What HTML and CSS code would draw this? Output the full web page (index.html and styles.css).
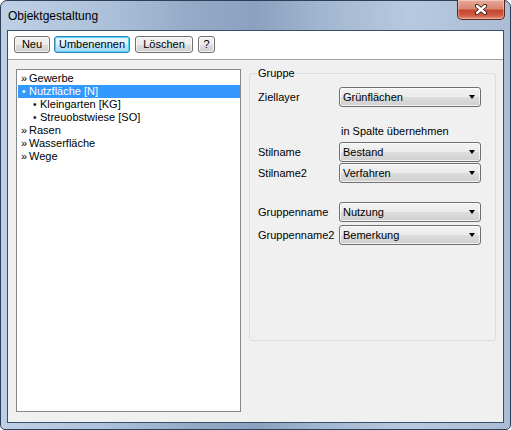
FILE: index.html
```html
<!DOCTYPE html>
<html>
<head>
<meta charset="utf-8">
<link rel="stylesheet" href="styles.css">
</head>
<body>
<div class="window">
  <div class="titlebar">
    <span class="title">Objektgestaltung</span>
    <div class="close">
      <svg width="14" height="11" viewBox="0 0 14 11">
        <path d="M3 2 L11 9 M11 2 L3 9" stroke="#3b1a14" stroke-width="4.2" stroke-linecap="round"/>
        <path d="M3 2 L11 9 M11 2 L3 9" stroke="#ffffff" stroke-width="2.4" stroke-linecap="round"/>
      </svg>
    </div>
  </div>
  <div class="client">
    <div class="toolbar">
      <button class="btn w-neu">Neu</button>
      <button class="btn default w-umb">Umbenennen</button>
      <button class="btn w-los">Löschen</button>
      <button class="btn w-q">?</button>
    </div>
    <div class="content">
      <div class="listbox">
        <div class="row"><span class="mark">»</span>Gewerbe</div>
        <div class="row selected"><span class="mark dot">•</span>Nutzfläche [N]</div>
        <div class="row child"><span class="mark dot">•</span>Kleingarten [KG]</div>
        <div class="row child"><span class="mark dot">•</span>Streuobstwiese [SO]</div>
        <div class="row"><span class="mark">»</span>Rasen</div>
        <div class="row"><span class="mark">»</span>Wasserfläche</div>
        <div class="row"><span class="mark">»</span>Wege</div>
      </div>
      <div class="group">
        <div class="legend">Gruppe</div>
        <div class="field first">
          <span class="label">Ziellayer</span>
          <div class="combo"><span>Grünflächen</span><i class="arrow"></i></div>
        </div>
        <div class="note">in Spalte übernehmen</div>
        <div class="field gap4">
          <span class="label">Stilname</span>
          <div class="combo"><span>Bestand</span><i class="arrow"></i></div>
        </div>
        <div class="field gap1">
          <span class="label">Stilname2</span>
          <div class="combo"><span>Verfahren</span><i class="arrow"></i></div>
        </div>
        <div class="field gap19">
          <span class="label">Gruppenname</span>
          <div class="combo"><span>Nutzung</span><i class="arrow"></i></div>
        </div>
        <div class="field gap3">
          <span class="label">Gruppenname2</span>
          <div class="combo"><span>Bemerkung</span><i class="arrow"></i></div>
        </div>
      </div>
    </div>
  </div>
</div>
</body>
</html>
```

FILE: styles.css
```css
* { box-sizing: border-box; }
html, body { margin: 0; padding: 0; background: #ffffff; }
body {
  font-family: "Liberation Sans", Arial, sans-serif;
  font-size: 11px;
  color: #000;
}
.window {
  width: 511px;
  height: 430px;
  border: 1px solid #2e3f57;
  border-radius: 7px 7px 5px 5px;
  padding: 0 6px 6px 6px;
  background:
    linear-gradient(90deg, #bdd0e6 0%, #adc1da 20%, #93aac7 38%, #8aa1bf 50%, #a0b5cf 62%, #b7c9df 80%, #abbdd5 100%);
  display: flex;
  flex-direction: column;
}
.titlebar {
  height: 29px;
  display: flex;
  justify-content: space-between;
  align-items: flex-start;
  padding: 0 0 0 1px;
}
.title {
  font-family: "Liberation Sans", Arial, sans-serif;
  font-size: 12px;
  line-height: 15px;
  padding-top: 8px;
  color: #000;
}
.close {
  width: 48px;
  height: 20px;
  margin-top: -1px;
  margin-right: -1px;
  border: 1px solid #57251c;
  border-top: none;
  border-radius: 0 0 5px 5px;
  background: linear-gradient(#e9a99a 0%, #d98773 45%, #c6452d 55%, #cf5a40 80%, #e19078 100%);
  box-shadow: inset 0 0 0 1px rgba(255,255,255,0.35);
  display: flex;
  align-items: center;
  justify-content: center;
}
.close svg { display: block; }
.client {
  flex: 1;
  border: 1px solid #3b4e68;
  background: #f0f0f0;
  display: flex;
  flex-direction: column;
}
.toolbar {
  height: 29px;
  background: #ffffff;
  border-bottom: 1px solid #a0a0a0;
  padding: 5px 0 0 6px;
  display: flex;
  align-items: flex-start;
}
.btn {
  height: 17px;
  padding: 0;
  margin: 0 5px 0 0;
  font-family: "Liberation Sans", Arial, sans-serif;
  font-size: 11px;
  line-height: 15px;
  color: #000;
  border: 1px solid #707070;
  border-radius: 3px;
  background: linear-gradient(#f2f2f2 0%, #ebebeb 50%, #dddddd 51%, #cfcfcf 100%);
  box-shadow: inset 0 0 0 1px rgba(255,255,255,0.7);
}
.btn.default {
  border-color: #3c7fb1;
  background: linear-gradient(#eaf6fd 0%, #d9f0fc 50%, #bee6fd 51%, #a7d9f5 100%);
  box-shadow: inset 0 0 0 1px #48d8fb;
}
.w-neu { width: 36px; margin-right: 4px; }
.w-umb { width: 76px; }
.w-los { width: 58px; }
.w-q { width: 17px; }
.content {
  flex: 1;
  display: flex;
  align-items: flex-start;
  padding: 9px 0 0 8px;
}
.listbox {
  width: 225px;
  height: 343px;
  background: #ffffff;
  border: 1px solid #828790;
  padding: 2px 0 0 1px;
}
.row {
  height: 13px;
  line-height: 13px;
  padding-left: 3px;
  display: flex;
  white-space: nowrap;
}
.row .mark { width: 8px; flex: none; }
.row .dot { font-size: 10px; padding-left: 1px; color: #10142a; }
.row.child { padding-left: 14px; }
.row.selected { background: #3399ff; color: #ffffff; }
.row.selected .dot { color: #ffffff; }
.group {
  margin: 4px 0 0 8px;
  width: 247px;
  height: 268px;
  border: 1px solid #d5dfe5;
  border-radius: 3px;
  padding: 0 8px;
}
.legend {
  width: fit-content;
  margin: -7px 0 0 -1px;
  padding: 0 2px 0 1px;
  line-height: 13px;
  background: #f0f0f0;
}
.field {
  display: flex;
  align-items: center;
  height: 20px;
}
.field.first { margin-top: 7px; }
.gap4 { margin-top: 4px; }
.gap1 { margin-top: 1px; }
.gap19 { margin-top: 19px; }
.gap3 { margin-top: 3px; }
.label {
  width: 81px;
  flex: none;
  white-space: nowrap;
}
.note {
  margin-top: 18px;
  line-height: 13px;
  height: 13px;
  padding-left: 83px;
}
.combo {
  width: 142px;
  height: 20px;
  border: 1px solid #707070;
  border-radius: 3px;
  background: linear-gradient(#f2f2f2 0%, #ebebeb 50%, #dddddd 51%, #cfcfcf 100%);
  box-shadow: inset 0 0 0 1px rgba(255,255,255,0.7);
  display: flex;
  align-items: center;
  justify-content: space-between;
  padding: 0 5px 0 3px;
}
.combo span { line-height: 14px; }
.arrow {
  width: 0;
  height: 0;
  border-left: 3.5px solid transparent;
  border-right: 3.5px solid transparent;
  border-top: 4px solid #000;
}
```
